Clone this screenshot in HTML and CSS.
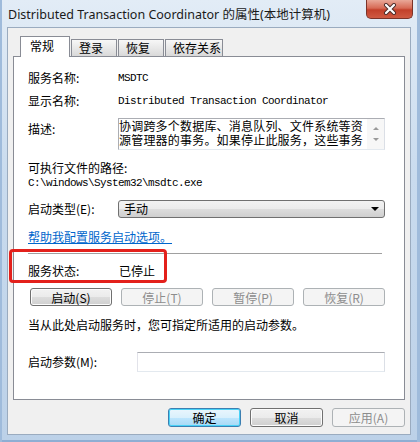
FILE: index.html
```html
<!DOCTYPE html>
<html lang="zh-CN">
  <head>
    <meta charset="UTF-8" />
    <title>Distributed Transaction Coordinator 的属性(本地计算机)</title>
    <link rel="stylesheet" href="styles.css">
  </head>
  <body>
    <div class="window">
      <div class="titlebar">
        <span class="title">Distributed Transaction Coordinator 的属性(本地计算机)</span>
        <div class="close">
          <svg width="14" height="12" viewBox="0 0 14 12">
            <path d="M3 2 L11 10 M11 2 L3 10" stroke="#4a2a28" stroke-width="4" stroke-linecap="round" />
            <path d="M3 2 L11 10 M11 2 L3 10" stroke="#fff" stroke-width="2.2" stroke-linecap="round" />
          </svg>
        </div>
      </div>

      <div class="client">
        <div class="tabs">
          <div class="tab active">常规</div>
          <div class="tab">登录</div>
          <div class="tab">恢复</div>
          <div class="tab wide">依存关系</div>
        </div>

        <div class="panel">
          <div class="row r-name">
            <span class="label">服务名称:</span>
            <span class="mono">MSDTC</span>
          </div>
          <div class="row r-display">
            <span class="label">显示名称:</span>
            <span class="mono">Distributed Transaction Coordinator</span>
          </div>
          <div class="row r-desc">
            <span class="label">描述:</span>
            <div class="desc">
              <div class="desc-text">
                <p>协调跨多个数据库、消息队列、文件系统等资</p>
                <p>源管理器的事务。如果停止此服务，这些事务</p>
              </div>
              <div class="scroll">
                <span class="arrow up"></span>
                <span class="arrow down"></span>
              </div>
            </div>
          </div>
          <div class="row r-pathlabel">可执行文件的路径:</div>
          <div class="row r-path mono">C:\windows\System32\msdtc.exe</div>
          <div class="row r-type">
            <span class="label">启动类型(E):</span>
            <div class="combo">
              <span>手动</span>
              <span class="drop"></span>
            </div>
          </div>
          <div class="row r-link"><a href="#">帮助我配置服务启动选项。</a></div>
          <hr class="sep" />
          <div class="row r-status">
            <span class="label">服务状态:</span>
            <span>已停止</span>
          </div>
          <div class="row r-buttons">
            <button class="btn">启动(S)</button>
            <button class="btn" disabled>停止(T)</button>
            <button class="btn" disabled>暂停(P)</button>
            <button class="btn" disabled>恢复(R)</button>
          </div>
          <div class="row r-hint">当从此处启动服务时，您可指定所适用的启动参数。</div>
          <div class="row r-param">
            <span class="label">启动参数(M):</span>
            <div class="input"></div>
          </div>
        </div>

        <div class="footer">
          <button class="btn default">确定</button>
          <button class="btn">取消</button>
          <button class="btn" disabled>应用(A)</button>
        </div>
      </div>

      <div class="highlight"></div>
    </div>
  </body>
</html>
```

FILE: styles.css
```css
* {
  margin: 0;
  padding: 0;
  box-sizing: border-box;
}

body {
  font-family: "Noto Sans CJK SC", "Noto Sans", sans-serif;
  font-size: 12px;
  color: #000;
  background: #c8d8ea;
}

.window {
  position: relative;
  width: 420px;
  height: 442px;
  padding: 0 9px 0 7px;
  background: linear-gradient(180deg, #e2ecf6 0%, #c9dbee 40%, #bcd1e8 100%);
  box-shadow: inset 2px 0 0 #9fbbdb, inset -3px 0 0 #9fbbdb, inset 0 -2px 0 #8eaed3;
  overflow: hidden;
}

/* title bar */
.titlebar {
  position: relative;
  display: flex;
  align-items: center;
  height: 27px;
  padding-left: 1px;
}

.title {
  font-family: "Noto Sans", "Noto Sans CJK SC", sans-serif;
  font-size: 12.5px;
  color: #1a1a1a;
}

.close {
  position: absolute;
  top: 0;
  right: -2px;
  width: 47px;
  height: 19px;
  display: flex;
  align-items: center;
  justify-content: center;
  border: 1px solid #7b3328;
  border-top: none;
  border-radius: 0 0 5px 5px;
  background: linear-gradient(180deg, #e9a898 0%, #d76a55 45%, #c2402a 55%, #cf5a42 100%);
}

/* client area */
.client {
  height: 408px;
  background: #f0f0f0;
  border: 1px solid #9aabbf;
  padding: 8px 5px 0 5px;
}

.tabs {
  display: flex;
  align-items: flex-end;
  height: 20px;
  padding-left: 7px;
}

.tab {
  height: 17px;
  width: 46px;
  padding-left: 7px;
  line-height: 16px;
  border: 1px solid #898c95;
  border-bottom: none;
  background: linear-gradient(180deg, #f7f7f7 0%, #e8e8e8 50%, #d9d9d9 100%);
}

.tab + .tab {
  margin-left: 1px;
}

.tab.active {
  position: relative;
  z-index: 1;
  width: 50px;
  height: 21px;
  margin-bottom: -1px;
  padding-left: 9px;
  line-height: 18px;
  background: #fff;
}

.tab.wide {
  width: 58px;
}

.panel {
  width: 392px;
  height: 344px;
  background: #fff;
  border: 1px solid #898c95;
  padding: 13px 19px 0 14px;
}

.row {
  display: flex;
  align-items: center;
  height: 16px;
  line-height: 16px;
}

.label {
  flex: none;
  width: 90px;
}

.mono {
  font-family: "Liberation Mono", monospace;
  font-size: 11px;
  letter-spacing: -0.6px;
}

.r-display {
  margin-top: 7px;
}

.r-desc {
  margin-top: 9px;
  height: 32px;
  align-items: flex-start;
}

.r-desc .label {
  margin-top: 3px;
}

.desc {
  flex: 1;
  height: 32px;
  display: flex;
  border: 1px solid #abadb3;
  border-right-color: #dbdfe6;
  border-bottom-color: #e3e9ef;
}

.desc-text {
  flex: 1;
  height: 30px;
  overflow: hidden;
  line-height: 14px;
  letter-spacing: 0.2px;
  white-space: nowrap;
}

.scroll {
  width: 17px;
  display: flex;
  flex-direction: column;
  align-items: center;
  justify-content: center;
  gap: 8px;
  background: #f7f7f7;
}

.arrow {
  width: 0;
  height: 0;
  border-left: 3px solid transparent;
  border-right: 3px solid transparent;
}

.arrow.up {
  border-bottom: 3px solid #9a9a9a;
}

.arrow.down {
  border-top: 3px solid #9a9a9a;
}

.r-pathlabel {
  margin-top: 10px;
}

.r-path {
  height: 14px;
  line-height: 14px;
}

.r-type {
  margin-top: 10px;
  height: 18px;
}

.combo {
  flex: 1;
  height: 18px;
  display: flex;
  align-items: center;
  justify-content: space-between;
  padding: 0 5px 0 5px;
  border: 1px solid #707070;
  border-radius: 3px;
  background: linear-gradient(180deg, #f2f2f2 0%, #ebebeb 50%, #dddddd 51%, #cfcfcf 100%);
}

.drop {
  width: 0;
  height: 0;
  border-left: 4px solid transparent;
  border-right: 4px solid transparent;
  border-top: 4px solid #000;
}

.r-link {
  margin-top: 11px;
}

.r-link a {
  color: #0066cc;
  text-decoration: underline;
}

.sep {
  margin-top: 8px;
  width: 354px;
  border: none;
  border-top: 1px solid #a0a0a0;
}

.r-status {
  margin-top: 9px;
}

.r-status .label {
  width: 91px;
}

.r-buttons {
  margin-top: 9px;
  height: 18px;
  padding-left: 2px;
  gap: 9px;
}

.btn {
  width: 82px;
  height: 18px;
  font-family: "Noto Sans CJK SC", "Noto Sans", sans-serif;
  font-size: 12px;
  line-height: 15px;
  color: #000;
  border: 1px solid #707070;
  border-radius: 3px;
  background: linear-gradient(180deg, #f2f2f2 0%, #ebebeb 50%, #dddddd 51%, #cfcfcf 100%);
  box-shadow: inset 0 0 0 1px #fcfcfc;
}

.btn:disabled {
  color: #8d8d8d;
  border-color: #adb2b5;
  background: #f4f4f4;
  box-shadow: none;
}

.btn.default {
  border-color: #3c7fb1;
  background: linear-gradient(180deg, #eaf6fd 0%, #d9f0fc 50%, #bee6fd 51%, #a7d9f5 100%);
  box-shadow: inset 0 0 0 1px #48d2f7;
}

.r-hint {
  margin-top: 11px;
}

.r-param {
  margin-top: 19px;
  height: 20px;
}

.r-param .label {
  width: 109px;
}

.input {
  flex: 1;
  height: 20px;
  border: 1px solid #abadb3;
  border-left-color: #e2e3ea;
  border-right-color: #dbdfe6;
  border-bottom-color: #e3e9ef;
}

.footer {
  display: flex;
  justify-content: flex-end;
  gap: 9px;
  margin-top: 8px;
  width: 392px;
}

.footer .btn {
  width: 73px;
  height: 19px;
}

/* red annotation drawn over the dialog */
.highlight {
  position: absolute;
  left: 9px;
  top: 249px;
  width: 158px;
  height: 34px;
  border: 3px solid #e3201b;
  border-radius: 4px;
}
```
